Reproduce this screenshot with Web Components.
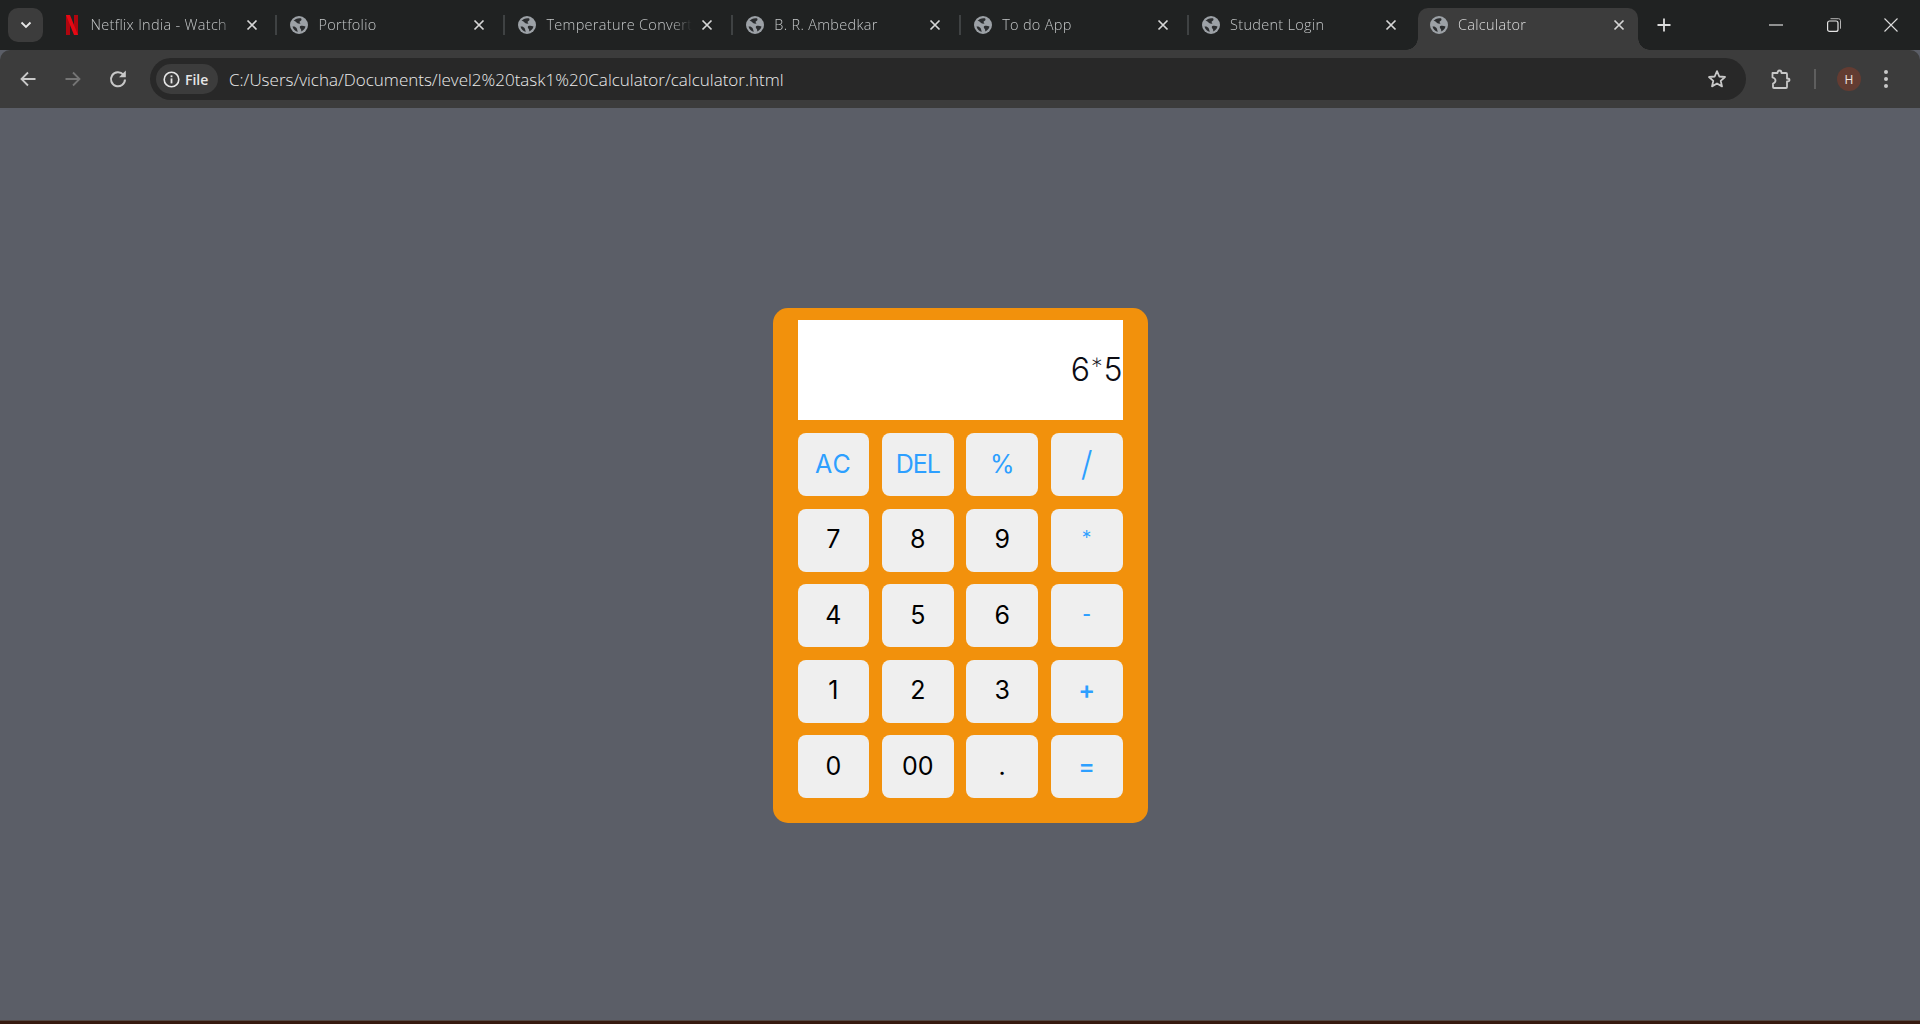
<!DOCTYPE html>
<html>
<head>
<meta charset="utf-8">
<title>Calculator</title>
<style>
  html, body { margin: 0; height: 100%; background: #5b5e67; }
  body { display: flex; flex-direction: column; height: 1024px; overflow: hidden; }
</style>
</head>
<body>
<tab-strip>
  <browser-tab icon="netflix" title="Netflix India - Watch"></browser-tab>
  <browser-tab sep title="Portfolio"></browser-tab>
  <browser-tab sep title="Temperature Convert"></browser-tab>
  <browser-tab sep title="B. R. Ambedkar"></browser-tab>
  <browser-tab sep title="To do App"></browser-tab>
  <browser-tab sep title="Student Login"></browser-tab>
  <browser-tab active title="Calculator"></browser-tab>
</tab-strip>
<tool-bar url="C:/Users/vicha/Documents/level2%20task1%20Calculator/calculator.html"></tool-bar>
<page-area>
  <calc-app>
    <span slot="screen">6<span style="font-family: Lato, sans-serif">*</span>5</span>
    <calc-key op style="letter-spacing: 1px">AC</calc-key>
    <calc-key op style="letter-spacing: -1px">DEL</calc-key>
    <calc-key op>%</calc-key>
    <calc-key op big>/</calc-key>
    <calc-key>7</calc-key>
    <calc-key>8</calc-key>
    <calc-key>9</calc-key>
    <calc-key op style="font-family: Lato, sans-serif">*</calc-key>
    <calc-key>4</calc-key>
    <calc-key>5</calc-key>
    <calc-key>6</calc-key>
    <calc-key op style="font-family: Lato, sans-serif; padding-bottom: 5px">-</calc-key>
    <calc-key>1</calc-key>
    <calc-key>2</calc-key>
    <calc-key>3</calc-key>
    <calc-key op style="font-weight: 600">+</calc-key>
    <calc-key>0</calc-key>
    <calc-key>00</calc-key>
    <calc-key>.</calc-key>
    <calc-key op style="font-weight: 500">=</calc-key>
  </calc-app>
</page-area>
<task-edge></task-edge>

<script>
const GLOBE = `<svg width="18" height="18" viewBox="0 0 18 18"><circle cx="9" cy="9" r="9" fill="#9ca1a6"/><path d="M3.500 5C5 2.800 8 1.700 11 2.300c.9 1.200.5 2.300-.6 2.700-1.300.5-.9 1.700.2 2.500-1.900.5-3.600-.2-4.300-1.200C5.600 5.400 4.700 5 3.500 5z" fill="#2b2d2f"/><path d="M2.500 10.500c1.700-.4 3.200.3 4 1.500.7 1.100.5 2 1.400 3.700-2.700-.3-4.700-2.400-5.400-5.200z" fill="#2b2d2f"/><path d="M10 10.200c1.700-.8 3.700-.5 5.500.4-.5 2.400-2.300 4.200-4.600 4.900.6-1.100.4-1.900-.2-2.600-.7-.8-1.200-1.700-.7-2.700z" fill="#2b2d2f"/></svg>`;
const NETFLIX = `<svg width="16" height="20" viewBox="0 0 16 20"><path d="M2 0h4v20H2z" fill="#b0060f"/><path d="M10 0h4v20h-4z" fill="#b0060f"/><path d="M2 0h4l8 20h-4z" fill="#e50914"/></svg>`;
const CLOSE = `<svg width="12" height="12" viewBox="0 0 12 12"><path d="M1.500 1.500l9 9M10.500 1.500l-9 9" stroke="#d6d6d6" stroke-width="1.700" fill="none"/></svg>`;

class TabStrip extends HTMLElement {
  constructor() {
    super();
    this.attachShadow({ mode: "open" });
    this.shadowRoot.innerHTML = `
      <style>
        :host { display: flex; height: 50px; background: #202222; box-sizing: border-box; padding-left: 8px; flex: none; }
        .drop { width: 35px; height: 34px; margin-top: 8px; margin-right: 4.600px; border-radius: 10px; background: #3c3c3c; display: flex; align-items: center; justify-content: center; flex: none; }
        .tabs { display: flex; flex: none; }
        .plus { width: 20px; margin-left: 11px; height: 34px; margin-top: 8px; display: flex; align-items: center; justify-content: center; }
        .win { margin-left: auto; display: flex; }
        .win div { width: 57.500px; height: 50px; display: flex; align-items: center; justify-content: center; }
      </style>
      <div class="drop"><svg width="12" height="8" viewBox="0 0 12 8"><path d="M1.500 1.500L6 6l4.500-4.500" stroke="#e8e8e8" stroke-width="1.800" fill="none"/></svg></div>
      <div class="tabs"><slot></slot></div>
      <div class="plus"><svg width="16" height="16" viewBox="0 0 16 16"><path d="M8 1.500v13M1.500 8h13" stroke="#dcdcdc" stroke-width="1.800" fill="none"/></svg></div>
      <div class="win">
        <div><svg width="14" height="2" viewBox="0 0 14 2"><path d="M0 1h14" stroke="#dcdcdc" stroke-width="1.200"/></svg></div>
        <div><svg width="14" height="14" viewBox="0 0 14 14" fill="none"><rect x=".6" y="3" width="10.400" height="10.400" rx="2" stroke="#e4e4e4" stroke-width="1.200"/><path d="M3.500 .7h8a2 2 0 0 1 2 2v8" stroke="#b4b4b4" stroke-width="1"/></svg></div>
        <div><svg width="14" height="14" viewBox="0 0 14 14"><path d="M.5 .5l13 13M13.500 .5l-13 13" stroke="#dcdcdc" stroke-width="1.100" fill="none"/></svg></div>
      </div>`;
  }
}

class BrowserTab extends HTMLElement {
  constructor() {
    super();
    this.attachShadow({ mode: "open" });
  }

  connectedCallback() {
    const title = this.getAttribute("title") || "";
    const icon = this.getAttribute("icon") === "netflix" ? NETFLIX : GLOBE;
    this.removeAttribute("title");
    this.shadowRoot.innerHTML = `
      <style>
        :host { display: block; position: relative; width: 227.900px; height: 50px; flex: none; font: 14.500px "Open Sans", sans-serif; color: #c4c7c8; }
        .sep { position: absolute; left: 0; top: 15px; width: 2px; height: 20px; background: #3f4243; display: none; }
        :host([sep]) .sep { display: block; }
        .bg { display: none; position: absolute; left: 3.500px; right: 5px; top: 8px; bottom: 0; background: #3c3c3c; border-radius: 10px 10px 0 0; }
        :host([active]) .bg { display: block; }
        .foot { position: absolute; bottom: 0; width: 12px; height: 12px; background: radial-gradient(circle at var(--cx) 0, transparent 11.500px, #3c3c3c 12px); }
        .foot.l { left: -12px; --cx: 0; }
        .foot.r { right: -12px; --cx: 12px; }
        .row { position: absolute; left: 0; right: 0; top: 15px; height: 20px; display: flex; align-items: center; }
        .ico { margin-left: 15px; width: 18px; height: 18px; flex: none; display: flex; align-items: center; justify-content: center; }
        .title { margin-left: 10px; margin-top: -2px; width: 146px; flex: none; white-space: nowrap; font-weight: 300; letter-spacing: .3px; -webkit-mask-image: linear-gradient(to right, #000 126px, transparent 146px); mask-image: linear-gradient(to right, #000 126px, transparent 146px); }
        .x { margin-left: 9px; width: 12px; height: 12px; display: flex; flex: none; }
        :host([active]) .title { color: #dedede; }
      </style>
      <div class="sep"></div>
      <div class="bg"><div class="foot l"></div><div class="foot r"></div></div>
      <div class="row">
        <div class="ico">${icon}</div>
        <div class="title">${title}</div>
        <div class="x">${CLOSE}</div>
      </div>`;
  }
}

class ToolBar extends HTMLElement {
  constructor() {
    super();
    this.attachShadow({ mode: "open" });
  }

  connectedCallback() {
    const url = this.getAttribute("url") || "";
    this.shadowRoot.innerHTML = `
      <style>
        :host { display: flex; align-items: center; height: 58px; background: #3c3c3c; border-radius: 10px 10px 0 0; box-sizing: border-box; padding: 0 20px; flex: none; font-family: "Open Sans", sans-serif; }
        .nav { width: 16px; height: 16px; display: flex; margin-right: 29px; flex: none; }
        .nav:nth-of-type(3) { margin-right: 24px; }
        .omni { margin-left: 0; width: 1596px; height: 42px; border-radius: 21px; background: #282828; display: flex; align-items: center; flex: none; box-sizing: border-box; padding-left: 6px; }
        .chip { width: 62px; height: 30px; border-radius: 15px; background: #3c3c3c; display: flex; align-items: center; box-sizing: border-box; padding-left: 7px; gap: 5px; font-size: 14px; font-weight: 600; color: #e6e6e6; flex: none; }
        .url { margin-left: 11px; font-size: 17px; font-weight: 300; color: #ececec; white-space: nowrap; }
        .star { margin-left: auto; margin-right: 19px; display: flex; }
        .ext { margin-left: 24px; display: flex; }
        .bar { margin-left: 23px; width: 2px; height: 20px; background: #5e5e5e; }
        .ava { margin-left: 21px; width: 24px; height: 24px; border-radius: 50%; background: #633c32; color: #f0e6e2; font-size: 12px; display: flex; align-items: center; justify-content: center; }
        .dots { margin-left: 22px; display: flex; }
      </style>
      <div class="nav"><svg width="16" height="16" viewBox="0 0 16 16" fill="none" stroke="#c8c8c8" stroke-width="1.800"><path d="M15.500 8H1.500M8 1.500L1.500 8 8 14.500"/></svg></div>
      <div class="nav"><svg width="16" height="16" viewBox="0 0 16 16" fill="none" stroke="#757575" stroke-width="1.800"><path d="M.5 8h14M8 1.500L14.500 8 8 14.500"/></svg></div>
      <div class="nav"><svg width="16" height="16" viewBox="0 0 16 16" fill="none" stroke="#c8c8c8" stroke-width="2" overflow="visible"><path d="M13.300 3.700A7 7 0 1 0 15 8.500"/><path d="M15.800 -.6v6.800H9z" stroke="none" fill="#c8c8c8"/></svg></div>
      <div class="omni">
        <div class="chip">
          <svg width="17" height="17" viewBox="0 0 17 17"><circle cx="8.500" cy="8.500" r="7.300" fill="none" stroke="#e6e6e6" stroke-width="1.600"/><rect x="7.600" y="7.400" width="1.800" height="5" fill="#e6e6e6"/><rect x="7.600" y="4.400" width="1.800" height="1.800" fill="#e6e6e6"/></svg>
          <span>File</span>
        </div>
        <div class="url">${url}</div>
        <div class="star"><svg width="20" height="20" viewBox="0 0 20 20"><path d="M10 2.200l2.300 5.300 5.700.5-4.300 3.800 1.300 5.600L10 14.500l-5 2.900 1.300-5.600L2 8l5.700-.5z" fill="none" stroke="#c8c8c8" stroke-width="1.800" stroke-linejoin="round"/></svg></div>
      </div>
      <div class="ext"><svg width="21" height="21" viewBox="0 0 21 21"><path d="M2.500 4h5C7.500 2.500 8 1.500 9.500 1.500S11.500 2.500 11.500 4H16a1 1 0 0 1 1 1v4.500c1.500 0 2.500.7 2.500 1.500S18.500 12.500 17 12.500V18a1 1 0 0 1-1 1H4a1 1 0 0 1-1-1v-3.500C4.500 14 5.500 13 5.500 11.500S4.500 9 2.500 8.500z" fill="none" stroke="#c8c8c8" stroke-width="1.800" stroke-linejoin="round"/></svg></div>
      <div class="bar"></div>
      <div class="ava">H</div>
      <div class="dots"><svg width="6" height="20" viewBox="0 0 6 20" fill="#c8c8c8"><circle cx="3" cy="3" r="2"/><circle cx="3" cy="10" r="2"/><circle cx="3" cy="17" r="2"/></svg></div>`;
  }
}

class PageArea extends HTMLElement {
  constructor() {
    super();
    this.attachShadow({ mode: "open" });
    this.shadowRoot.innerHTML = `
      <style>
        :host { display: flex; flex: 1; min-height: 0; align-items: center; justify-content: center; background: #5b5e67; padding-top: 3px; box-sizing: border-box; }
      </style>
      <slot></slot>`;
  }
}

class CalcApp extends HTMLElement {
  constructor() {
    super();
    this.attachShadow({ mode: "open" });
    this.shadowRoot.innerHTML = `
      <style>
        :host { display: block; width: 375px; height: 515px; box-sizing: border-box; padding: 12px 25px 25px; background: #f2910c; border-radius: 15px; font-family: Inter, sans-serif; }
        .screen { height: 100px; box-sizing: border-box; padding-bottom: 2px; background: #fff; display: flex; align-items: center; justify-content: flex-end; font-size: 32px; font-weight: 300; color: #0c0c14; margin-bottom: 13px; }
        .keys { display: grid; grid-template-columns: repeat(4, 1fr); grid-auto-rows: 63px; gap: 12.500px; }
      </style>
      <div class="screen"><slot name="screen"></slot></div>
      <div class="keys"><slot></slot></div>`;
  }
}

class CalcKey extends HTMLElement {
  constructor() {
    super();
    this.attachShadow({ mode: "open" });
    this.shadowRoot.innerHTML = `
      <style>
        :host { display: flex; align-items: center; justify-content: center; box-sizing: border-box; padding-bottom: 2px; background: #efefef; border-radius: 8px; font-size: 25px; color: #000; font-family: Inter, sans-serif; }
        :host([op]) { color: #2d9fff; }
        :host([big]) { font-size: 34px; font-weight: 300; }
      </style>
      <slot></slot>`;
  }
}

class TaskEdge extends HTMLElement {
  constructor() {
    super();
    this.attachShadow({ mode: "open" });
    this.shadowRoot.innerHTML = `
      <style>
        :host { display: block; height: 4px; flex: none; box-sizing: border-box; background: #36190f; border-top: 1px solid #544843; }
      </style>`;
  }
}

customElements.define("tab-strip", TabStrip);
customElements.define("browser-tab", BrowserTab);
customElements.define("tool-bar", ToolBar);
customElements.define("page-area", PageArea);
customElements.define("calc-app", CalcApp);
customElements.define("calc-key", CalcKey);
customElements.define("task-edge", TaskEdge);
</script>
</body>
</html>
